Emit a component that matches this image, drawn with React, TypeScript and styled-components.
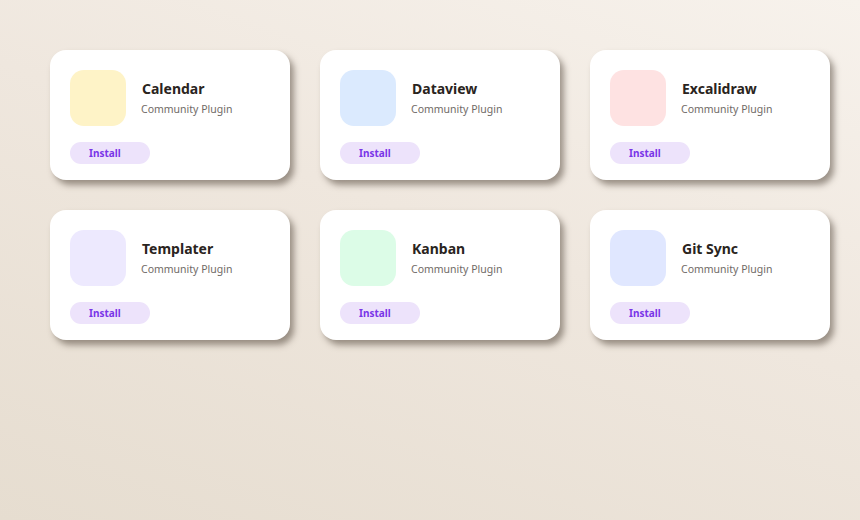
import { createGlobalStyle, styled } from "styled-components";

const GlobalStyle = createGlobalStyle`
    html, body {
        margin: 0;
        padding: 0;
    }

    body {
        width: 860px;
        height: 520px;
        overflow: hidden;
        font-family: "Noto Sans", "Open Sans", sans-serif;
        background: linear-gradient(200deg, #f7f2ec 0%, #efe7de 45%, #e6ddd0 100%);
    }
`

const Page = styled.div`
    width: 860px;
    height: 520px;
    box-sizing: border-box;
    padding: 50px 0 0 50px;
`

const Grid = styled.div`
    display: grid;
    grid-template-columns: repeat(3, 240px);
    column-gap: 30px;
    row-gap: 30px;
`

const Card = styled.div`
    width: 240px;
    height: 130px;
    box-sizing: border-box;
    padding: 20px 20px 16px 20px;
    background-color: #FFF;
    border-radius: 16px;
    box-shadow: 4px 5px 6px rgba(70, 58, 45, 0.5);
    display: flex;
    flex-direction: column;
    gap: 16px;
`

const Head = styled.div`
    display: flex;
    align-items: center;
    gap: 15px;
`

const Icon = styled.div<{ $bg: string }>`
    width: 56px;
    height: 56px;
    border-radius: 14px;
    background-color: ${(p) => p.$bg};
    flex-shrink: 0;
`

const Info = styled.div`
    display: flex;
    flex-direction: column;
    gap: 2px;

    .title {
        margin: 0 0 0 1px;
        font-size: 14px;
        font-weight: 700;
        line-height: 20px;
        color: #2a2420;
    }

    .sub {
        margin: 0;
        font-size: 10.5px;
        font-weight: 400;
        line-height: 16px;
        color: #6f6a66;
    }
`

const InstallButton = styled.button`
    width: 80px;
    height: 22px;
    padding: 0 0 1px 19px;
    border: none;
    border-radius: 11px;
    background-color: #ede3fb;
    color: #7a35e8;
    font-family: inherit;
    font-size: 10px;
    font-weight: 700;
    text-align: left;
    cursor: pointer;
`

interface PluginCardProps {
    name: string,
    color: string,
}

function PluginCard(props: PluginCardProps) {
    return (
        <Card>
            <Head>
                <Icon $bg={props.color} />
                <Info>
                    <p className="title">{props.name}</p>
                    <p className="sub">Community Plugin</p>
                </Info>
            </Head>
            <InstallButton>Install</InstallButton>
        </Card>
    )
}

const plugins = [
    { name: "Calendar", color: "#fef3c7" },
    { name: "Dataview", color: "#dbeafe" },
    { name: "Excalidraw", color: "#fee2e2" },
    { name: "Templater", color: "#ede9fe" },
    { name: "Kanban", color: "#dcfce7" },
    { name: "Git Sync", color: "#e0e7ff" },
]

export default function App() {
    return (
        <>
            <GlobalStyle />
            <Page>
                <Grid>
                    {plugins.map((p) => (
                        <PluginCard key={p.name} name={p.name} color={p.color} />
                    ))}
                </Grid>
            </Page>
        </>
    )
}
